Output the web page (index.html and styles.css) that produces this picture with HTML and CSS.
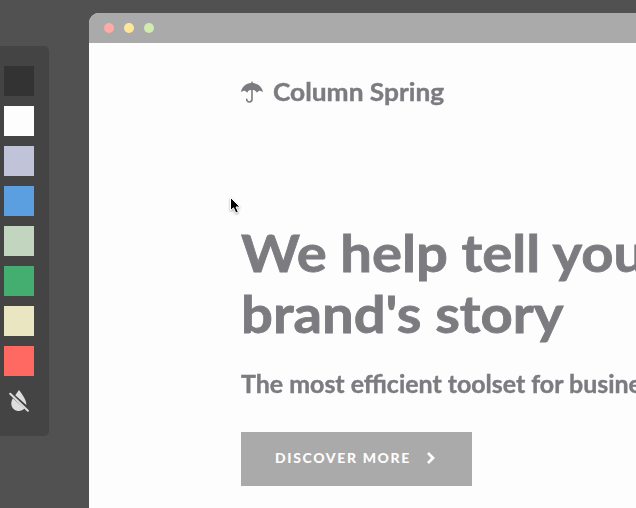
FILE: index.html
```html
<!DOCTYPE html>
<html lang="en">
<head>
<meta charset="utf-8">
<title>Column Spring</title>
<link rel="stylesheet" href="styles.css">
</head>
<body>
<div class="stage">
  <aside class="palette">
    <span class="swatch charcoal"></span>
    <span class="swatch white"></span>
    <span class="swatch lavender"></span>
    <span class="swatch blue"></span>
    <span class="swatch sage"></span>
    <span class="swatch green"></span>
    <span class="swatch cream"></span>
    <span class="swatch coral"></span>
    <svg class="no-color" width="20" height="22" viewBox="0 0 20 22">
      <path d="M10 0C8.800 1.700 7.300 3.700 6.300 5.300L17.300 15.100C18 11 13.500 4.800 10 0ZM3.900 8.200C1.500 12 1.900 16.200 4.600 19C7.800 22 12.800 21.700 15.500 18.600Z"/>
      <path class="slash" d="M1.200 3.800L18.900 20.800"/>
    </svg>
  </aside>
  <main class="window">
    <header class="titlebar">
      <span class="dot red"></span>
      <span class="dot yellow"></span>
      <span class="dot lime"></span>
    </header>
    <section class="page">
      <div class="brand">
        <svg class="umbrella" width="22" height="22" viewBox="0 0 22 22">
          <path d="M10.200 2V.8Q11 0 11.800.8V2C17 2.300 20.800 5.800 22 10.500Q21.800 11.100 21.200 10.700C19.300 9 17.400 9.500 16.300 11.200Q15.900 11.700 15.500 11.200C14.500 9.500 12.600 8.500 11 9.500C9.400 8.500 7.500 9.500 6.500 11.200Q6.100 11.700 5.700 11.200C4.600 9.500 2.700 9 .8 10.700Q.2 11.100 0 10.500C1.200 5.800 5 2.300 10.200 2Z"/>
          <path class="handle" d="M11 9V18.300C11 21.800 5.700 21.800 5.700 18.300"/>
        </svg>
        <span class="name">Column Spring</span>
      </div>
      <h1>We help tell your<br>brand's story</h1>
      <p class="lead">The most efficient toolset for businesses</p>
      <a class="button"><span class="label">DISCOVER MORE</span>
        <svg width="10" height="14" viewBox="0 0 10 14"><path d="M2 2L7 7L2 12"/></svg>
      </a>
    </section>
  </main>
  <svg class="cursor" width="14" height="20" viewBox="0 0 14 20">
    <path d="M1.500 1.500V14.500L4.500 11.800L6.800 17L9.300 15.900L7 11H11Z"/>
  </svg>
</div>
</body>
</html>
```
FILE: styles.css
```css
* { box-sizing: border-box; }
body { margin: 0; background: #515151; font-family: Lato, sans-serif; color: #7c7b80; }
.stage { position: relative; display: flex; align-items: flex-start; gap: 40px; width: 636px; height: 508px; overflow: hidden; }
.palette { flex: none; width: 49px; height: 390px; margin-top: 46px; padding: 20px 0 0 4px; display: flex; flex-direction: column; gap: 10px; background: #444; border-radius: 0 5px 5px 0; }
.swatch { flex: none; width: 30px; height: 30px; }
.charcoal { background: #333; }
.white { background: #fdfdfd; }
.lavender { background: #c1c4d8; }
.blue { background: #5c9fe0; }
.sage { background: #c2d5bf; }
.green { background: #43ae70; }
.cream { background: #eae6c1; }
.coral { background: #ff6961; }
.no-color { margin: 4px 0 0 5px; fill: #ddd; }
.slash { fill: none; stroke: #ddd; stroke-width: 2; stroke-linecap: round; }
.window { flex: none; width: 560px; height: 500px; margin-top: 13px; background: #fdfdfd; border-radius: 10px 0 0 0; overflow: hidden; }
.titlebar { display: flex; align-items: center; gap: 10px; height: 30px; padding-left: 15px; background: #aaa; }
.dot { width: 10px; height: 10px; border-radius: 50%; }
.red { background: #ffaaa7; }
.yellow { background: #ffe79a; }
.lime { background: #d2ebae; }
.page { padding: 34px 0 0 152px; white-space: nowrap; }
.brand { display: flex; align-items: center; height: 30px; gap: 10px; }
.umbrella { fill: #7c7b80; }
.handle { fill: none; stroke: #7c7b80; stroke-width: 1.600; stroke-linecap: round; }
.name, h1, .lead { transform-origin: 0 0; font-weight: 700; }
.name { font-size: 24px; line-height: 30px; transform: scaleX(1.096); -webkit-text-stroke: .4px; }
h1 { margin: 115px 0 0; font-size: 51px; line-height: 61px; transform: scaleX(1.102); -webkit-text-stroke: .8px; }
.lead { margin: 25px 0 0; font-size: 24px; line-height: 30px; transform: scaleX(1.039); -webkit-text-stroke: .4px; }
.button { display: flex; align-items: center; gap: 15px; width: 231px; height: 54px; margin-top: 33px; padding: 0 0 2px 34px; background: #aaa; color: #fdfdfd; font-size: 14px; font-weight: 900; letter-spacing: 1.640px; }
.label { padding-bottom: 1px; }
.button path { fill: none; stroke: #fdfdfd; stroke-width: 2.800; }
.cursor { position: absolute; left: 229px; top: 196px; fill: #000; stroke: #fff; stroke-width: 1; filter: drop-shadow(0 1px 1px #0005); }
```
